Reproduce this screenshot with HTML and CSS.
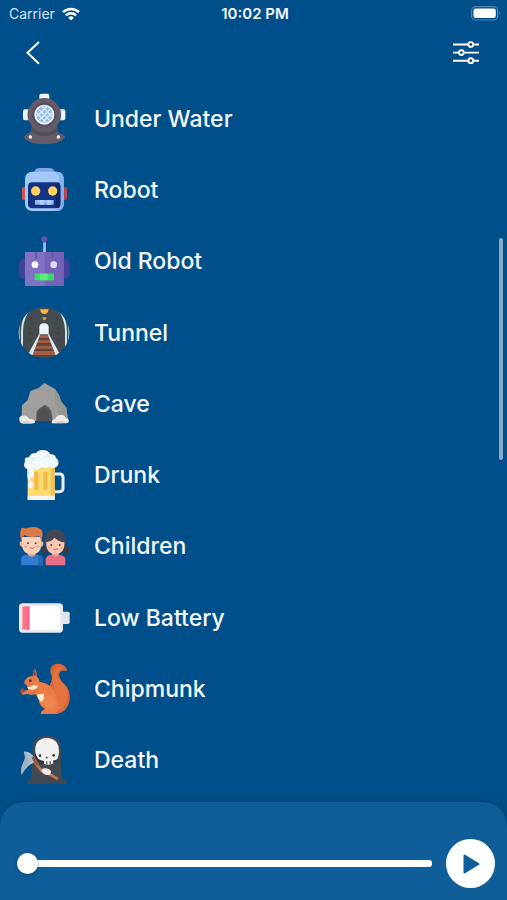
FILE: index.html
```html
<!DOCTYPE html>
<html lang="en">
<head>
<meta charset="utf-8">
<meta name="viewport" content="width=device-width, initial-scale=1">
<title>Voice Effects</title>
<link rel="stylesheet" href="styles.css">
</head>
<body>
<div class="app">
  <div class="status">
    <div class="carrier">
      <span>Carrier</span>
      <svg width="18" height="14" viewBox="0 0 18 14" fill="none" stroke="#fff" stroke-width="2.5"><path d="M1 5.2a11.4 11.4 0 0 1 16 0M3.9 8.3a7.2 7.2 0 0 1 10.2 0"/><path d="M9 13.6 6.1 10.7a4.1 4.1 0 0 1 5.8 0z" fill="#fff" stroke="none"/></svg>
    </div>
    <span class="time">10:02 PM</span>
    <svg class="power" width="30" height="15" viewBox="0 0 30 15"><rect x=".6" y=".6" width="26" height="13.4" rx="4" fill="none" stroke="#5488b4" stroke-width="1.1"/><rect x="2.4" y="2.6" width="22.4" height="9.4" rx="2.3" fill="#fff"/><path d="M28.2 5.2q1.7 2.1 0 4.2z" fill="#6f9bc0"/></svg>
  </div>
  <header class="toolbar">
    <button class="icon-button" type="button" aria-label="Back">
      <svg width="16" height="26" viewBox="0 0 16 26" fill="none" stroke="#fff" stroke-width="2"><path d="M14 2 2.5 12.8 14 23.8"/></svg>
    </button>
    <button class="icon-button" type="button" aria-label="Settings">
      <svg width="28" height="26" viewBox="0 0 28 26" fill="none" stroke="#fff" stroke-width="1.9"><path d="M1 4.5h15.2M21.4 4.5H27M1 12.6h6M12 12.6h15M1 20.7h15.2M21.4 20.7H27"/><circle cx="18.8" cy="4.5" r="2.4"/><circle cx="9.4" cy="12.6" r="2.4"/><circle cx="18.8" cy="20.7" r="2.4"/></svg>
    </button>
  </header>
  <main class="content">
    <ul class="effects">
      <li><a class="effect" href="#under-water">
        <svg class="art" viewBox="24 26 156 156"><rect x="88" y="28" width="30" height="22" rx="6" fill="#f0f3fa"/><path d="M94 41h18v9H94z" fill="#c8cddd"/><rect x="39" y="75" width="18" height="33" rx="6" fill="#f0f3fa"/><rect x="148" y="75" width="18" height="33" rx="6" fill="#f0f3fa"/><path d="M52 75h6v33h-6zM148 75h6v33h-6z" fill="#b9c0d2"/><path d="M66 122h74l4 22q15 6 22 15-16 21-63 21t-63-21q7-9 22-15z" fill="#655c68"/><path d="M66 130q37 30 74 0l2 12q-39 25-78 0z" fill="#544b58"/><circle cx="103" cy="91" r="50" fill="#655c68"/><circle cx="103" cy="91" r="36" fill="#574e5b"/><circle cx="103" cy="91" r="30" fill="#f3f6fc"/><circle cx="103" cy="91" r="25" fill="#8dbced"/><path d="M85 74l35 35M95 66l33 33M78 84l33 33M121 74l-35 35M111 66 78 99M128 84l-33 33" stroke="#dcebfb" stroke-width="4"/><circle cx="61" cy="158" r="5" fill="#fff"/><circle cx="145" cy="158" r="5" fill="#fff"/></svg>
        <span>Under Water</span></a></li>
      <li><a class="effect" href="#robot">
        <svg class="art" viewBox="24 24 156 156"><rect x="36" y="93" width="16" height="39" rx="6" fill="#d9534d"/><rect x="154" y="93" width="17" height="39" rx="6" fill="#b8434b"/><path d="M72 52q2-15 14-16h35q12 1 14 16z" fill="#7fa6e2"/><rect x="45" y="47" width="116" height="118" rx="21" fill="#a2c8fa"/><path d="M140 47q21 0 21 21v76q0 21-21 21h-12q20-3 20-21V68q0-18-20-21z" fill="#86b1ef"/><rect x="54" y="79" width="97" height="78" rx="12" fill="#153385"/><path d="M60 79h84q-7 3-7 13v64h7q7-3 7-12V92q0-11-7-13z" fill="#102869"/><circle cx="77" cy="105" r="14" fill="#fdd35d"/><circle cx="128" cy="105" r="14" fill="#fdd35d"/><path d="M75 132h56v14H75z" fill="#92b9f6"/><path d="M89 132h13v14H89zM110 132h12v14h-12z" fill="#b3d0fc"/></svg>
        <span>Robot</span></a></li>
      <li><a class="effect" href="#old-robot">
        <svg class="art" viewBox="24 21 156 156"><path d="M99 43h9v32h-9z" fill="#9faced"/><circle cx="103" cy="34" r="9" fill="#6254aa"/><path d="M46 92H36q-10 8-10 30t10 30h10zM161 92h11q9 8 9 30t-9 30h-11z" fill="#40419b"/><path d="M45 72h116v102H45z" fill="#8270c5"/><path d="M104 72h57v102h-57z" fill="#7562b8"/><path d="M76 72h5v20h-5zM125 72h5v20h-5z" fill="#6656aa"/><circle cx="75" cy="110" r="10" fill="#fff"/><circle cx="131" cy="110" r="10" fill="#dce0f4"/><path d="M74 137h58v20H74z" fill="#3bdb69"/><path d="M90 137h23v20H90z" fill="#61eb7e"/></svg>
        <span>Old Robot</span></a></li>
      <li><a class="effect" href="#tunnel">
        <svg class="art" viewBox="24 26 156 156"><defs><clipPath id="tunnel-round"><circle cx="102" cy="103" r="76"/></clipPath></defs><g clip-path="url(#tunnel-round)"><path d="M24 25h156v156H24z" fill="#464b50"/><path d="M54 38Q36 66 36 100v66M150 38q18 28 18 62v66" stroke="#c9e6ee" stroke-width="6" fill="none"/><path d="M24 60h9q-5 20-4 48l2 30h-7zM180 60h-9q5 20 4 48l-2 30h7z" fill="#b3cfd8"/><path d="M88 110V88q0-13 14-13t14 13v22z" fill="#e9f3fd"/><path d="m88 108-38 73h104l-38-73z" fill="#59443e"/><path d="M90 111h24l3 8H86zM82 126h39l4 8H78zM74 142h55l4 9H70zM65 158h73l5 12H60z" fill="#a55d43"/><path d="m88 106-33 60 10 10 26-68zM116 106l33 60-10 10-26-68z" fill="#dcecf5"/><path d="M90 33h26q-2 14-13 14T90 33z" fill="#f4ba3b"/><path d="M97 57h13q-2 9-7 9t-6-9z" fill="#d89d2c"/><path d="M60 67l7-12M56 88h7M56 106h7M56 124h7M144 67l-7-12M148 88h-7M148 106h-7M148 124h-7" stroke="#373e45" stroke-width="4"/></g></svg>
        <span>Tunnel</span></a></li>
      <li><a class="effect" href="#cave">
        <svg class="art" viewBox="24 29 156 156"><path d="m34 158 2-47 17-16 8-27 25-9 17-15 32 18 13 20 5 17 16 19 5 40z" fill="#a09f9e"/><path d="m135 62 13 20 5 17 16 19 5 40h-23l-8-34-9-20z" fill="#979695"/><path d="m78 158 2-29 11-11 14-9 12 9 7 11 4 29z" fill="#5a595a"/><path d="M83 158v-24l19-20 15 20v24z" fill="#525152"/><path d="M28 154q-1-13 11-12 12-2 18 10 14-2 18 7 2 6-7 6H34q-6-3-6-11zM125 162q2-10 11-10 3-13 17-12 10-2 14 9 12 2 9 12-2 4-10 4h-35q-6 2-6-3z" fill="#ece9e7"/><path d="M33 163q11-9 20-4t17 5l-6 2H39zM131 165q11-8 21-7 11 0 19 6z" fill="#d8d2d0"/></svg>
        <span>Cave</span></a></li>
      <li><a class="effect" href="#drunk">
        <svg class="art" viewBox="24 27 156 156"><path d="M132 102h17q10 0 10 10v33q0 10-10 10h-17" fill="none" stroke="#e5f0f5" stroke-width="9"/><path d="M53 79h81v101H53z" fill="#ffda71"/><path d="M122 79h12v101h-12z" fill="#f3c35a"/><rect x="73" y="95" width="12" height="55" rx="5" fill="#f4ba48"/><rect x="100" y="95" width="12" height="55" rx="5" fill="#f4ba48"/><path d="M53 167h81v13H53z" fill="#f1f5f5"/><path d="M45 83q-6-9 0-18-4-14 12-13 5-14 21-13 8-11 24-9 13 1 19 13 14-1 17 10 10 8 7 20-3 11-18 11-7 0-11-4-10 9-20 0-12 14-24 6v16q0 12-11 12v10q8 0 9 8 1 9-8 13-8-1-8-10 0-6 5-10-7-6-7-15V88z" fill="#f2f9fc"/><path d="M65 66q2-15 15-14M100 54q9-12 20-3" fill="none" stroke="#dcebf1" stroke-width="4"/></svg>
        <span>Drunk</span></a></li>
      <li><a class="effect" href="#children">
        <svg class="art" viewBox="24 27 156 156"><path d="M33 163v-20q2-10 14-12l18-3 20 4q12 2 13 12v19z" fill="#327ccf"/><path d="M84 132q14 1 14 12v19H85z" fill="#2468b7"/><path d="M54 120h22v12q-11 11-22 0z" fill="#e9a88f"/><path d="M36 91q-8 0-7 9t9 8zM93 91q8 0 7 9t-9 8z" fill="#f1b39a"/><path d="M36 78h58v25q-2 27-29 27t-29-27z" fill="#ffd2b8"/><path d="M34 91q-7-24 0-39 5-4 12 1 15-8 33-4 22 5 19 24l-5 18q-1-12-6-16-27 7-44-3-6 7-9 19z" fill="#dc7b45"/><path d="M103 103q-10 7-6 20 1 9 10 8 9-3 10-14zM165 103q13 3 13 17-2 12-12 11-9-1-11-13z" fill="#343c47"/><path d="M107 163v-18q2-11 14-13l15-2 17 3q13 3 13 13v17z" fill="#e76e84"/><path d="M126 120h20v13q-10 9-20 0z" fill="#e3a18c"/><path d="M103 94q-1-37 31-40 34 1 34 40l-7 21h-51z" fill="#414852"/><path d="M109 93q18-3 25-13 11 12 29 14v10q-3 25-27 25t-27-25z" fill="#fec7b1"/><g fill="#4b4748"><circle cx="54" cy="97" r="3"/><circle cx="77" cy="97" r="3"/><circle cx="124" cy="102" r="3"/><circle cx="149" cy="102" r="3"/></g><g fill="#f4a79c"><circle cx="47" cy="107" r="5"/><circle cx="84" cy="107" r="5"/><circle cx="118" cy="111" r="4"/><circle cx="154" cy="111" r="4"/></g><path d="M59 109q7 8 14 0M130 113q7 7 13 0" stroke="#c65e57" stroke-width="3" fill="none"/></svg>
        <span>Children</span></a></li>
      <li><a class="effect" href="#low-battery">
        <svg class="art" viewBox="24 28 156 156"><path d="M154 87h20q5 0 5 5v27q0 5-5 5h-20z" fill="#e2e5e8"/><rect x="27" y="62" width="132" height="88" rx="11" fill="#e9ebf1"/><path d="M37 71h113v70H37z" fill="#fff"/><path d="M37 71h21v70H37z" fill="#ff708a"/><path d="M53 71h5v70h-5z" fill="#f55f7d"/></svg>
        <span>Low Battery</span></a></li>
      <li><a class="effect" href="#chipmunk">
        <svg class="art" viewBox="24 26 156 156"><path d="M120 91q10-17 2-34-5-21 15-28 21-4 32 13 5 8-1 7-19-3-21 11 1 17 17 30 20 20 14 52-7 30-36 37H94q-2-12 15-13l8-20z" fill="#d76637"/><path d="M165 44q-19-3-22 13-2 14 13 29 18 18 17 38-2 33-33 49l-18-14 10-64q-6-8-4-29 1-31 29-29z" fill="#e37440"/><path d="m68 66 2-15q2-7 5-7 6 6 5 22 7 6 8 16 22 3 34 15 17 17 19 38l4 25-7 18H92q2-11 14-14-18-8-21-30l-8-14q-12 3-25-1l-13 2q-7-3-7-10 1-6 7-5 8 7 16-2l-5-12q-11-1-5-14 9-14 23-12z" fill="#ea7d47"/><path d="M98 128q15-12 31 2 13 14 4 37-12-8-24-2-13-11-11-37z" fill="#ee854c"/><path d="M51 98q12 1 20-6l14 2q-8 16-29 10z" fill="#fae8c9"/><path d="m82 120 19-2q4 13-6 26-13-10-13-24z" fill="#fae8c9"/><path d="M31 104q5-5 11 1l2 8q-11 6-13-2z" fill="#9c4e37"/><path d="m70 53 5-8 3 17-7 4z" fill="#913c38"/><circle cx="61" cy="79" r="4" fill="#45313a"/><path d="M66 116q11-1 19-10" stroke="#ce6638" stroke-width="3" fill="none"/></svg>
        <span>Chipmunk</span></a></li>
      <li><a class="effect" href="#death">
        <svg class="art" viewBox="24 27 156 156"><path d="M50 177q0-11 14-15l5-105q5-23 41-25 33 0 42 28l3 99q15 4 17 18z" fill="#414952"/><path d="M76 75q1-34 34-34 35 0 36 35v24l-13 15-44 3-13-21z" fill="#30373e"/><path d="M76 82q-4-41 34-43 38 1 37 43l-3 17q-4 8-14 7v9q-14 8-29 1v-9q-20 1-25-25z" fill="#f2f1f0"/><g fill="#363a40"><circle cx="90" cy="92" r="4"/><circle cx="131" cy="91" r="4"/><path d="m110 94-4 6h8zM99 108h3v9h-3zM109 109h3v9h-3zM119 108h3v9h-3z"/></g><path d="m64 92 16 27 15 18 20 8 29 17" fill="none" stroke="#bb744b" stroke-width="9"/><path d="M41 80q16-2 29 13l8 17q-14 5-24 14-12 11-19 25-5-19 6-38 8-15 0-31z" fill="#aabdca"/><path d="M41 80q19 17 13 44-12 11-19 25-5-19 6-38 8-15 0-31z" fill="#9db3c2"/><path d="m72 94-8 4 15 24 8-5z" fill="#965940"/><path d="M94 137q2-9 12-7 11-1 18 9l-4 10q-17 5-26-12z" fill="#f3e9e5"/></svg>
        <span>Death</span></a></li>
    </ul>
    <div class="scroll-thumb" aria-hidden="true"></div>
  </main>
  <footer class="player">
    <input class="seek" type="range" min="0" max="100" value="0" aria-label="Playback position">
    <button class="play" type="button" aria-label="Play">
      <svg width="20" height="22" viewBox="0 0 20 22"><path d="M3.5 2.5v17l14-8.5z" fill="#0f5e99" stroke="#0f5e99" stroke-width="2" stroke-linejoin="round"/></svg>
    </button>
  </footer>
</div>
</body>
</html>
```
FILE: styles.css
```css
* {
  box-sizing: border-box;
}

body {
  margin: 0;
  background: #004f8a;
  color: #f4f9ff;
  font-family: Inter, "Liberation Sans", sans-serif;
}

button {
  display: flex;
  align-items: center;
  justify-content: center;
  padding: 0;
  border: 0;
  background: none;
}

svg {
  display: block;
}

.app {
  display: flex;
  flex-direction: column;
  min-height: 100vh;
}

.status {
  display: grid;
  grid-template-columns: 1fr auto 1fr;
  align-items: center;
  height: 27px;
  padding: 0 6px 0 9px;
  font-size: 15px;
}

.carrier {
  display: flex;
  align-items: center;
  gap: 7px;
  color: #d5e5f3;
  font-size: 14px;
}

.time {
  font-weight: 600;
}

.power {
  justify-self: end;
}

.toolbar {
  display: flex;
  align-items: center;
  justify-content: space-between;
  height: 56px;
  padding: 0 21px 4px 13px;
}

.icon-button {
  width: 40px;
  height: 44px;
}

.content {
  position: relative;
  display: flex;
  flex: 1;
}

.effects {
  display: grid;
  flex: 1;
  grid-auto-rows: 1fr;
  margin: 0;
  padding: 0 0 6px;
  list-style: none;
}

.effect {
  display: flex;
  align-items: center;
  gap: 24px;
  height: 100%;
  min-height: 60px;
  padding: 0 18px;
  color: inherit;
  font-size: 23px;
  font-weight: 500;
  text-decoration: none;
}

.art {
  width: 52px;
  height: 52px;
}

.scroll-thumb {
  position: absolute;
  top: 21.5%;
  right: 4px;
  width: 4px;
  height: 31%;
  border-radius: 2px;
  background: #86abc9;
}

.player {
  display: flex;
  align-items: center;
  gap: 14px;
  padding: 37px 12px 12px 17px;
  border-radius: 24px 24px 0 0;
  background: #0f5e99;
  box-shadow: 0 -1px 8px rgba(0, 35, 80, 0.3);
}

.seek {
  flex: 1;
  min-width: 0;
  height: 22px;
  margin: 0;
  appearance: none;
  background: none;
}

.seek::-webkit-slider-runnable-track {
  height: 7px;
  border-radius: 3px;
  background: #fff;
}

.seek::-webkit-slider-thumb {
  width: 21px;
  height: 21px;
  margin-top: -7px;
  appearance: none;
  border-radius: 50%;
  background: #fff;
  box-shadow: 0 1px 3px rgba(0, 30, 70, 0.5);
}

.play {
  width: 49px;
  height: 49px;
  border-radius: 50%;
  background: #fff;
}
```
